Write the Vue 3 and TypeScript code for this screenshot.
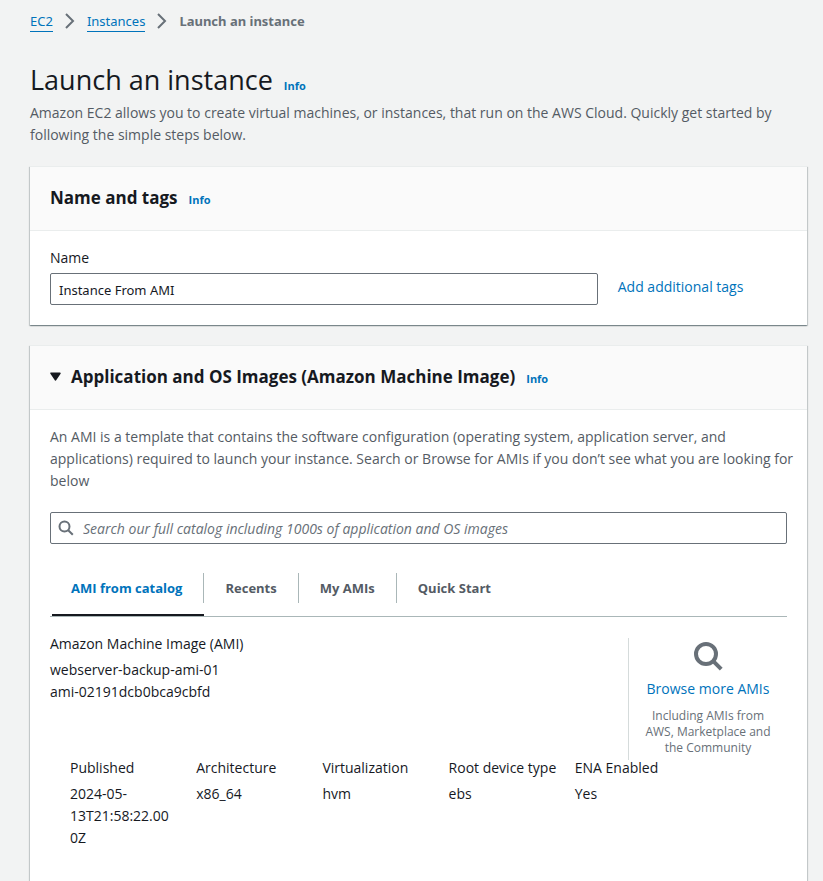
<script setup lang="ts">
import { ref } from 'vue'

interface Detail {
  label: string
  value: string
}

const crumbs: string[] = ['EC2', 'Instances']
const tabs: string[] = ['AMI from catalog', 'Recents', 'My AMIs', 'Quick Start']
const details: Detail[] = [
  { label: 'Published', value: '2024-05-13T21:58:22.000Z' },
  { label: 'Architecture', value: 'x86_64' },
  { label: 'Virtualization', value: 'hvm' },
  { label: 'Root device type', value: 'ebs' },
  { label: 'ENA Enabled', value: 'Yes' },
]

const instanceName = ref('Instance From AMI')
const search = ref('')
const activeTab = ref(tabs[0])
const imagesOpen = ref(true)
</script>

<template>
  <div class="page">
    <nav aria-label="Breadcrumbs">
      <ol class="crumbs">
        <li v-for="crumb in crumbs" :key="crumb">
          <a href="#">{{ crumb }}</a>
          <svg class="chevron" viewBox="0 0 16 16" aria-hidden="true"><path d="M4 1l7 7-7 7" /></svg>
        </li>
        <li class="current" aria-current="page">Launch an instance</li>
      </ol>
    </nav>

    <main>
      <header class="intro">
        <div class="title-row">
          <h1>Launch an instance</h1>
          <a href="#" class="info">Info</a>
        </div>
        <p>
          Amazon EC2 allows you to create virtual machines, or instances, that run on the AWS Cloud.
          Quickly get started by following the simple steps below.
        </p>
      </header>

      <section class="card">
        <div class="card-head">
          <h2>Name and tags</h2>
          <a href="#" class="info">Info</a>
        </div>
        <div class="card-body name-form">
          <label for="instance-name">Name</label>
          <input id="instance-name" v-model="instanceName" class="field" type="text" />
          <a href="#" class="add-tags">Add additional tags</a>
        </div>
      </section>

      <section class="card">
        <div class="card-head">
          <h2>
            <button class="toggle" type="button" :aria-expanded="imagesOpen" @click="imagesOpen = !imagesOpen">
              <svg class="caret" viewBox="0 0 10 8" aria-hidden="true"><path d="M1 1h8L5 7z" /></svg>
              <span>Application and OS Images (Amazon Machine Image)</span>
            </button>
          </h2>
          <a href="#" class="info">Info</a>
        </div>

        <div v-if="imagesOpen" class="card-body images">
          <p class="explain">
            An AMI is a template that contains the software configuration (operating system,
            application server, and applications) required to launch your instance. Search or Browse
            for AMIs if you don’t see what you are looking for below
          </p>

          <div class="search">
            <svg class="search-icon" viewBox="0 0 16 16" aria-hidden="true">
              <circle cx="6.5" cy="6.5" r="5" />
              <path d="M10.2 10.2l4.6 4.6" />
            </svg>
            <input
              v-model="search"
              class="field"
              type="search"
              aria-label="Search AMIs"
              placeholder="Search our full catalog including 1000s of application and OS images"
            />
          </div>

          <div class="tabs" role="tablist">
            <button
              v-for="tab in tabs"
              :key="tab"
              type="button"
              role="tab"
              :class="['tab', { active: tab === activeTab }]"
              :aria-selected="tab === activeTab"
              @click="activeTab = tab"
            >
              <span>{{ tab }}</span>
            </button>
          </div>

          <div class="ami">
            <div class="ami-name">
              <h3>Amazon Machine Image (AMI)</h3>
              <p>webserver-backup-ami-01</p>
              <p>ami-02191dcb0bca9cbfd</p>
            </div>
            <div class="browse">
              <svg class="browse-icon" viewBox="0 0 32 32" aria-hidden="true">
                <circle cx="14" cy="14" r="10" />
                <path d="M21.2 21.2l8 8" />
              </svg>
              <a href="#">Browse more AMIs</a>
              <p>Including AMIs from AWS, Marketplace and the Community</p>
            </div>
          </div>

          <dl class="details">
            <div v-for="item in details" :key="item.label">
              <dt>{{ item.label }}</dt>
              <dd>{{ item.value }}</dd>
            </div>
          </dl>
        </div>
      </section>
    </main>
  </div>
</template>

<style>
body {
  background: #f2f3f3;
}
</style>

<style scoped>
* {
  box-sizing: border-box;
}

.page {
  padding: 10px 16px 0 30px;
  color: #16191f;
  font-family: 'Open Sans', 'Noto Sans', sans-serif;
  font-size: 14px;
  line-height: 22px;
}

h1,
h2,
h3,
p,
dl,
dd,
ol {
  margin: 0;
  padding: 0;
}

a {
  color: #0073bb;
  text-decoration: none;
}

button {
  border: 0;
  padding: 0;
  background: none;
  color: inherit;
  font: inherit;
  cursor: pointer;
}

.crumbs {
  display: flex;
  list-style: none;
  font-family: 'Noto Sans', 'Open Sans', sans-serif;
  font-size: 13px;
}

.crumbs li {
  display: flex;
  align-items: center;
}

.crumbs a {
  border-bottom: 1px solid #0073bb;
  line-height: 20px;
}

.chevron {
  width: 16px;
  height: 16px;
  margin: 0 9px;
  fill: none;
  stroke: #687078;
  stroke-width: 2;
}

.crumbs .current {
  color: #687078;
  font-weight: 700;
}

.intro {
  padding: 30px 0 20px;
}

.intro p,
.explain {
  color: #545b64;
}

.title-row {
  display: flex;
  align-items: baseline;
  gap: 11px;
  margin-bottom: 4px;
}

h1 {
  font-size: 27px;
  font-weight: 400;
  line-height: 36px;
}

.info {
  font-size: 11px;
  font-weight: 700;
  line-height: 16px;
}

.card {
  margin-bottom: 20px;
  border-top: 1px solid #eaeded;
  background: #fff;
  box-shadow:
    0 1px 1px 0 rgba(0, 28, 36, 0.3),
    1px 1px 1px 0 rgba(0, 28, 36, 0.15),
    -1px 1px 1px 0 rgba(0, 28, 36, 0.15);
}

.card-head {
  display: flex;
  align-items: baseline;
  gap: 11px;
  padding: 19px 20px 21px;
  border-bottom: 1px solid #eaeded;
  background: #fafafa;
}

h2 {
  font-size: 17px;
  font-weight: 700;
  line-height: 23px;
}

.card-body {
  padding: 16px 20px 20px;
}

.name-form {
  display: grid;
  grid-template-columns: repeat(12, 1fr);
  align-items: center;
  column-gap: 20px;
  row-gap: 4px;
}

.name-form label {
  grid-column: 1 / -1;
}

.name-form .field {
  grid-column: span 9;
}

.add-tags {
  grid-column: span 3;
  align-self: start;
  line-height: 28px;
}

.field {
  width: 100%;
  height: 32px;
  border: 1px solid #687078;
  border-radius: 2px;
  padding: 2px 8px 0;
  background: #fff;
  color: #16191f;
  font: inherit;
}

.name-form .field {
  font-family: 'Noto Sans', 'Open Sans', sans-serif;
  font-size: 13px;
}

.toggle {
  display: flex;
  align-items: baseline;
  gap: 10px;
}

.caret {
  align-self: center;
  width: 11px;
  height: 9px;
  fill: #16191f;
  stroke: #16191f;
  stroke-width: 1.5;
  stroke-linejoin: round;
}

.explain {
  margin-right: -12px;
}

.search {
  display: flex;
  align-items: center;
  margin-top: 20px;
}

.search .field {
  margin-left: -24px;
  padding: 0 8px 0 32px;
  background: transparent;
}

.search .field::placeholder {
  color: #687078;
  font-style: italic;
  opacity: 1;
}

.search-icon {
  flex: none;
  width: 16px;
  height: 16px;
  margin-left: 8px;
  fill: none;
  stroke: #687078;
  stroke-width: 2;
}

.tabs {
  display: flex;
  margin-top: 20px;
  padding-left: 2px;
  border-bottom: 1px solid #aab7b8;
}

.tab {
  padding: 9px 0 11px;
  border-bottom: 2px solid transparent;
  color: #545b64;
  font-size: 13px;
  font-weight: 700;
}

.tab span {
  display: block;
  padding: 4px 21px;
  border-right: 1px solid #aab7b8;
}

.tab:first-child span {
  padding-left: 19px;
}

.tab:last-child span {
  border-right: 0;
}

.tab.active {
  border-bottom-color: #16191f;
  color: #0073bb;
}

.ami {
  display: flex;
  margin-top: 16px;
}

.ami-name {
  flex: 1;
}

h3 {
  margin-bottom: 4px;
  font-size: inherit;
  font-weight: 400;
}

.browse {
  display: flex;
  flex-direction: column;
  align-items: center;
  width: 159px;
  margin-top: 5px;
  border-left: 1px solid #d5dbdb;
  padding: 0 16px 4px;
  text-align: center;
}

.browse-icon {
  width: 32px;
  height: 32px;
  margin: 2px 0 6px;
  fill: none;
  stroke: #687078;
  stroke-width: 4;
}

.browse a {
  white-space: nowrap;
}

.browse p {
  margin: 8px -4px 0;
  color: #687078;
  font-size: 12px;
  line-height: 16px;
}

.details {
  display: grid;
  grid-template-columns: repeat(5, 17.6%);
  padding-left: 20px;
}

dt {
  margin-bottom: 7px;
  line-height: 16px;
  white-space: nowrap;
}

dd {
  padding-right: 22px;
  overflow-wrap: anywhere;
}

.images {
  padding-bottom: 44px;
}
</style>
